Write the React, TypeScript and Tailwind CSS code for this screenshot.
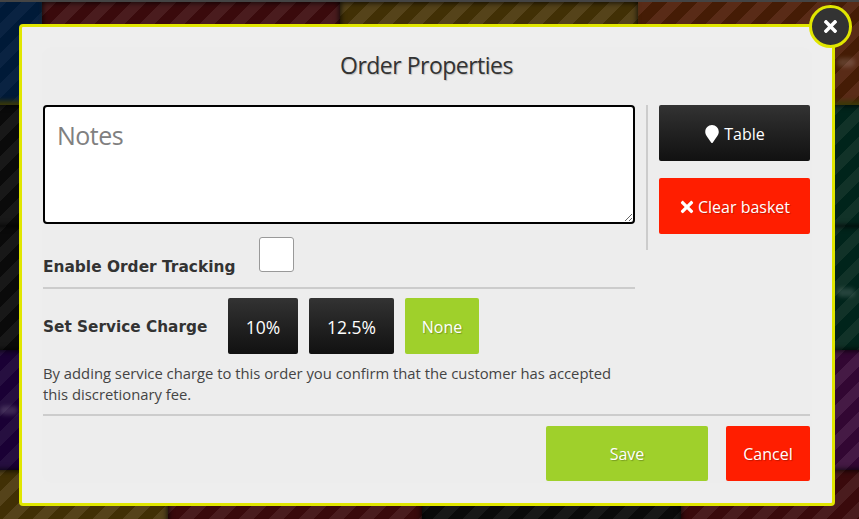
// Order properties dialog, sitting on top of the dimmed, striped till grid.

import { FaMapMarker, FaTimes } from "react-icons/fa";

const STRIPES = {
  blue: "bg-[repeating-linear-gradient(135deg,#0a2342_0,#0a2342_10.6px,#001a38_10.6px,#001a38_21.2px)]",
  red: "bg-[repeating-linear-gradient(135deg,#4a1c1e_0,#4a1c1e_10.6px,#3a0a0c_10.6px,#3a0a0c_21.2px)]",
  brown: "bg-[repeating-linear-gradient(135deg,#55431a_0,#55431a_10.6px,#413005_10.6px,#413005_21.2px)]",
  orange: "bg-[repeating-linear-gradient(135deg,#592b17_0,#592b17_10.6px,#451c05_10.6px,#451c05_21.2px)]",
  dark: "bg-[repeating-linear-gradient(135deg,#181818_0,#181818_10.6px,#0a0a0a_10.6px,#0a0a0a_21.2px)]",
  green: "bg-[repeating-linear-gradient(135deg,#113228_0,#113228_10.6px,#00241b_10.6px,#00241b_21.2px)]",
  indigo: "bg-[repeating-linear-gradient(135deg,#260f40_0,#260f40_10.6px,#1a0035_10.6px,#1a0035_21.2px)]",
  purple: "bg-[repeating-linear-gradient(135deg,#451a45_0,#451a45_10.6px,#320733_10.6px,#320733_21.2px)]",
};

const DARK_BTN = "rounded-[2px] bg-gradient-to-b from-[#333333] to-[#111111]";
const SHADOW = "[text-shadow:1px_1px_1px_rgba(0,0,0,0.25)]";

export default function App() {
  return (
    <div className="relative h-[519px] w-[859px] overflow-hidden bg-black font-['Open_Sans',sans-serif]">
      <TileGrid />
      <OrderDialog />
    </div>
  );
}

// ── Background ────────────────────────────────────────────────────────────────

function TileGrid() {
  // runs past the window edges so the tile shadows only show between tiles
  return (
    <div className="-mx-[8px] flex h-[527px] flex-col">
      <div className="h-[2px] bg-[#444444]" />
      <div className="flex h-[103px]">
        <Tile tone={STRIPES.blue} className="w-[50px]" glow />
        <Tile tone={STRIPES.red} className="w-[298px]" />
        <Tile tone={STRIPES.brown} className="w-[298px]" />
        <Tile tone={STRIPES.orange} className="flex-1" glow blur="right-[12px] top-[56px]" />
      </div>
      <div className="flex h-[121px] justify-between">
        <Tile tone={STRIPES.dark} className="w-[176px]" />
        <Tile tone={STRIPES.green} className="w-[186px]" />
      </div>
      <div className="flex h-[124px] justify-between">
        <Tile tone={STRIPES.dark} className="w-[176px]" />
        <Tile tone={STRIPES.green} className="w-[186px]" blur="right-[12px] top-[62px]" />
      </div>
      <div className="flex h-[120px] justify-between">
        <Tile tone={STRIPES.indigo} className="w-[176px]" blur="left-[8px] top-[56px]" />
        <Tile tone={STRIPES.purple} className="w-[186px]" />
      </div>
      <div className="flex flex-1">
        <Tile tone={STRIPES.brown} className="w-[176px]" />
        <Tile tone={STRIPES.red} className="w-[254px]" />
        <Tile tone={STRIPES.dark} className="w-[259px]" />
        <Tile tone={STRIPES.red} className="flex-1" />
      </div>
    </div>
  );
}

function Tile({
  tone,
  className,
  glow,
  blur,
}: {
  tone: string;
  className: string;
  glow?: boolean;
  blur?: string;
}) {
  return (
    <div
      className={`relative ${tone} ${className} ${
        glow
          ? "shadow-[inset_0_-6px_5px_-2px_#3a3808]"
          : "shadow-[inset_0_0_6px_#000]"
      }`}
    >
      {blur && (
        <span
          className={`absolute h-[9px] w-[18px] rounded-full bg-white/15 blur-[2px] ${blur}`}
        />
      )}
    </div>
  );
}

// ── Dialog ────────────────────────────────────────────────────────────────────

function OrderDialog() {
  return (
    <div className="absolute left-[19px] top-[24px] h-[482px] w-[816px] rounded-[4px] border-[3px] border-[#e0e600] bg-[#eeeeee] p-[20px] text-[#333333]">
      <div className="flex h-full flex-col rounded-[10px] bg-[#ededed] pl-px pr-[2px]">
        <h1 className="flex h-[58px] items-start justify-center pt-[3px] text-[23px] leading-[30px] tracking-[-0.5px] [text-shadow:1px_1px_1px_rgba(0,0,0,0.2)]">
          Order Properties
        </h1>

        <div className="flex items-start">
          <div className="w-[592px]">
            <textarea
              placeholder="Notes"
              className="block h-[119px] w-full rounded-[4px] border-2 border-black bg-white px-[12px] py-[12px] text-[25px] leading-[32px] tracking-[-0.5px] outline-none placeholder:text-[#808080]"
            />
            <div className="mt-[13px] flex items-end border-b-2 border-[#cccccc] pb-[15px]">
              <label className="-mb-[5px] w-[216px] font-['DejaVu_Sans',sans-serif] text-[15.4px] font-bold leading-[20px]">
                Enable Order Tracking
              </label>
              <span className="h-[35px] w-[35px] rounded-[3px] border border-[#999999] bg-white" />
            </div>
          </div>
          <div className="mx-[11px] h-[145px] w-[2px] bg-[#cccccc]" />
          <div className="flex w-[151px] flex-col gap-[17px] text-[16px] text-white">
            <button className={`flex h-[56px] items-center justify-center gap-[3px] pt-[2px] pr-[1px] ${DARK_BTN}`}>
              <FaMapMarker className="text-[18px]" />
              Table
            </button>
            <button className={`flex h-[56px] items-center justify-center gap-[2px] rounded-[2px] bg-[#ff1e00] pt-[2px] pr-[1px] ${SHADOW}`}>
              <FaTimes className="text-[18px]" />
              Clear basket
            </button>
          </div>
        </div>

        <div className="mt-[9px] flex w-[592px] items-center">
          <label className="w-[185px] pt-[2px] font-['DejaVu_Sans',sans-serif] text-[15.3px] font-bold leading-[20px]">
            Set Service Charge
          </label>
          <div className="flex gap-[11px] text-white">
            <button className={`h-[56px] w-[70px] pt-[2px] text-[17.5px] ${DARK_BTN}`}>10%</button>
            <button className={`h-[56px] w-[85px] pt-[2px] text-[17.5px] ${DARK_BTN}`}>12.5%</button>
            <button className={`h-[56px] w-[74px] rounded-[2px] bg-[#9fd02b] pt-[2px] text-[16px] ${SHADOW}`}>None</button>
          </div>
        </div>

        <p className="mt-[9px] h-[51px] w-[592px] text-[14.8px] leading-[21px] text-[#444444]">
          By adding service charge to this order you confirm that the customer has accepted this
          discretionary fee.
        </p>

        <div className="border-t-2 border-[#cccccc] pt-[10px]">
          <div className="flex justify-end gap-[18px] text-[16px] text-white">
            <button className={`h-[55px] w-[162px] rounded-[2px] bg-[#9fd02b] ${SHADOW}`}>Save</button>
            <button className={`h-[55px] w-[84px] rounded-[2px] bg-[#ff1e00] ${SHADOW}`}>Cancel</button>
          </div>
        </div>
      </div>

      <button className="absolute right-[-20px] top-[-22px] flex h-[43px] w-[43px] items-center justify-center rounded-full border-[3px] border-[#e0e600] bg-[#333333] text-white">
        <FaTimes className="text-[19px]" />
      </button>
    </div>
  );
}
